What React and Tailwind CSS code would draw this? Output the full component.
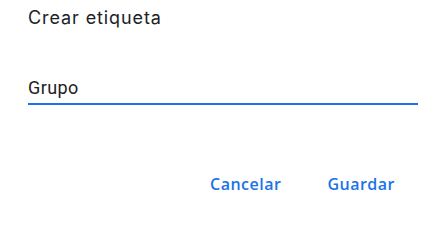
import React, { useState } from "react";

const App = () => {
  const [label, setLabel] = useState("Grupo");

  return (
    <div className="w-[448px] h-[210px] bg-white flex flex-col pl-[28px] pr-[30px] pt-[7px]">
      <h2 className="text-[18px] leading-[22px] tracking-[0.9px] text-[#202124] font-['Inter',sans-serif] font-normal">
        Crear etiqueta
      </h2>
      <div className="mt-[47px] border-b-2 border-[#1a73e8]">
        <input
          className="w-full outline-none text-[18px] leading-[22px] tracking-[0.4px] pb-[4px] text-[#202124] font-['Roboto',sans-serif] bg-transparent"
          value={label}
          onChange={(e) => setLabel(e.target.value)}
        />
      </div>
      <div className="flex justify-end gap-[46px] mt-[69px] pr-[23px]">
        <button className="text-[16px] leading-[20px] tracking-[0.5px] font-semibold text-[#1a73e8] font-['Open_Sans',sans-serif]">
          Cancelar
        </button>
        <button className="text-[16px] leading-[20px] tracking-[0.5px] font-semibold text-[#1a73e8] font-['Open_Sans',sans-serif]">
          Guardar
        </button>
      </div>
    </div>
  );
};

export default App;
